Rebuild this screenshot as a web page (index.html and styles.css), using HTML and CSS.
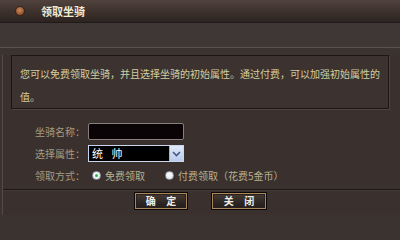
FILE: index.html
```html
<!DOCTYPE html>
<html lang="zh-CN">
<head>
<meta charset="utf-8">
<title>领取坐骑</title>
<link rel="stylesheet" href="styles.css">
</head>
<body>
<div class="dialog">
  <div class="titlebar">
    <span class="title-icon"></span>
    <span class="title">领取坐骑</span>
  </div>
  <div class="band"></div>
  <div class="main">
    <div class="info">您可以免费领取坐骑，并且选择坐骑的初始属性。通过付费，可以加强初始属性的值。</div>
    <div class="form">
      <div class="row">
        <span class="label">坐骑名称：</span>
        <span class="input"></span>
      </div>
      <div class="row">
        <span class="label">选择属性：</span>
        <span class="select">
          <span class="select-text">统 帅</span>
          <span class="select-btn">
            <svg width="9" height="6" viewBox="0 0 9 6"><path d="M1 1 L4.5 4.5 L8 1" fill="none" stroke="#45598a" stroke-width="1.6"/></svg>
          </span>
        </span>
      </div>
      <div class="row row-radio">
        <span class="label">领取方式：</span>
        <span class="radios">
          <span class="radio checked"></span><span class="radio-text">免费领取</span>
          <span class="radio second"></span><span class="radio-text">付费领取（花费5金币）</span>
        </span>
      </div>
    </div>
    <div class="footer">
      <button class="btn btn-ok">确 定</button>
      <button class="btn btn-close">关 闭</button>
    </div>
  </div>
</div>
</body>
</html>
```

FILE: styles.css
```css
html, body {
  margin: 0;
  padding: 0;
}
body {
  width: 400px;
  height: 215px;
  overflow: hidden;
  background: #3b3330;
  font-family: "Noto Sans CJK SC", "Noto Sans", sans-serif;
}
.dialog {
  width: 400px;
  height: 215px;
  background: #3b3330;
}
.titlebar {
  height: 22px;
  border-bottom: 1px solid #211a18;
  background: linear-gradient(#51423d, #3a2f2b 60%, #2c2421);
  display: flex;
  align-items: center;
  padding-left: 15px;
}
.title-icon {
  width: 10px;
  height: 10px;
  border-radius: 50%;
  box-sizing: border-box;
  border: 1px solid #3a2418;
  background: radial-gradient(circle at 45% 40%, #c98a5a, #9a5a34 60%, #6d3d22);
  margin-right: 16px;
}
.title {
  color: #f1ead2;
  font-size: 11px;
  font-weight: bold;
  line-height: 22px;
}
.band {
  height: 24px;
  background: #3e3735;
  border-bottom: 1px solid #5c514c;
}
.main {
  margin-left: 2px;
  border-left: 1px solid #564b46;
  height: 167px;
  background: #3a312e;
}
.info {
  margin: 7px 11px 0 8px;
  border: 1px solid #1c1512;
  box-shadow: 1px 1px 0 #4e4440;
  padding: 6px 3px 0 8px;
  height: 46px;
  color: #d6cd9f;
  font-size: 10px;
  line-height: 23px;
  background: #3c3330;
}
.form {
  padding-top: 14px;
  height: 66px;
}
.row {
  display: flex;
  align-items: center;
  height: 17px;
  margin-bottom: 5px;
}
.row-radio {
  margin-top: 2px;
}
.label {
  width: 82px;
  text-align: right;
  color: #a59c82;
  font-size: 10px;
  margin-right: 3px;
}
.input {
  width: 96px;
  height: 17px;
  box-sizing: border-box;
  border: 1px solid #85807b;
  border-radius: 2px;
  background: #0b0407;
}
.select {
  width: 96px;
  height: 17px;
  box-sizing: border-box;
  border: 1px solid #cad6ee;
  background: #000;
  display: flex;
}
.select-text {
  flex: 1;
  color: #fff;
  font-size: 11px;
  line-height: 15px;
  padding-left: 3px;
  letter-spacing: 3px;
}
.select-btn {
  width: 13px;
  height: 15px;
  background: linear-gradient(#e1e9f8, #b9cbeb);
  border-left: 1px solid #9fb3d8;
  display: flex;
  align-items: center;
  justify-content: center;
}
.radios {
  display: flex;
  align-items: center;
}
.radio {
  width: 9px;
  height: 9px;
  box-sizing: border-box;
  border-radius: 50%;
  border: 1px solid #9aa4b0;
  background: radial-gradient(circle at 40% 35%, #ffffff, #dfe4ea);
  margin-left: 4px;
  margin-right: 4px;
  position: relative;
}
.radio.checked::after {
  content: "";
  position: absolute;
  left: 2px;
  top: 2px;
  width: 3px;
  height: 3px;
  border-radius: 50%;
  background: #2db34a;
}
.radio.second {
  margin-left: 20px;
}
.radio-text {
  color: #b9b08f;
  font-size: 10px;
}
.footer {
  border-top: 1px solid #1d1714;
  box-shadow: inset 0 1px 0 #443a36;
  height: 25px;
  display: flex;
  justify-content: center;
  gap: 23px;
  padding-top: 2px;
  padding-right: 2px;
  box-sizing: border-box;
}
.btn {
  height: 18px;
  box-sizing: border-box;
  border: 1px solid #0c0807;
  box-shadow: inset 0 0 0 1px #a8885a, inset 0 0 0 2px #2a211c;
  background: linear-gradient(#463c36, #2a2320 70%, #231d1a);
  color: #f2efe8;
  font-family: "Noto Sans CJK SC", sans-serif;
  font-size: 10px;
  font-weight: bold;
  letter-spacing: 4px;
  padding: 0 0 0 4px;
  line-height: 16px;
  cursor: pointer;
}
.btn-ok {
  width: 54px;
}
.btn-close {
  width: 56px;
}
```
